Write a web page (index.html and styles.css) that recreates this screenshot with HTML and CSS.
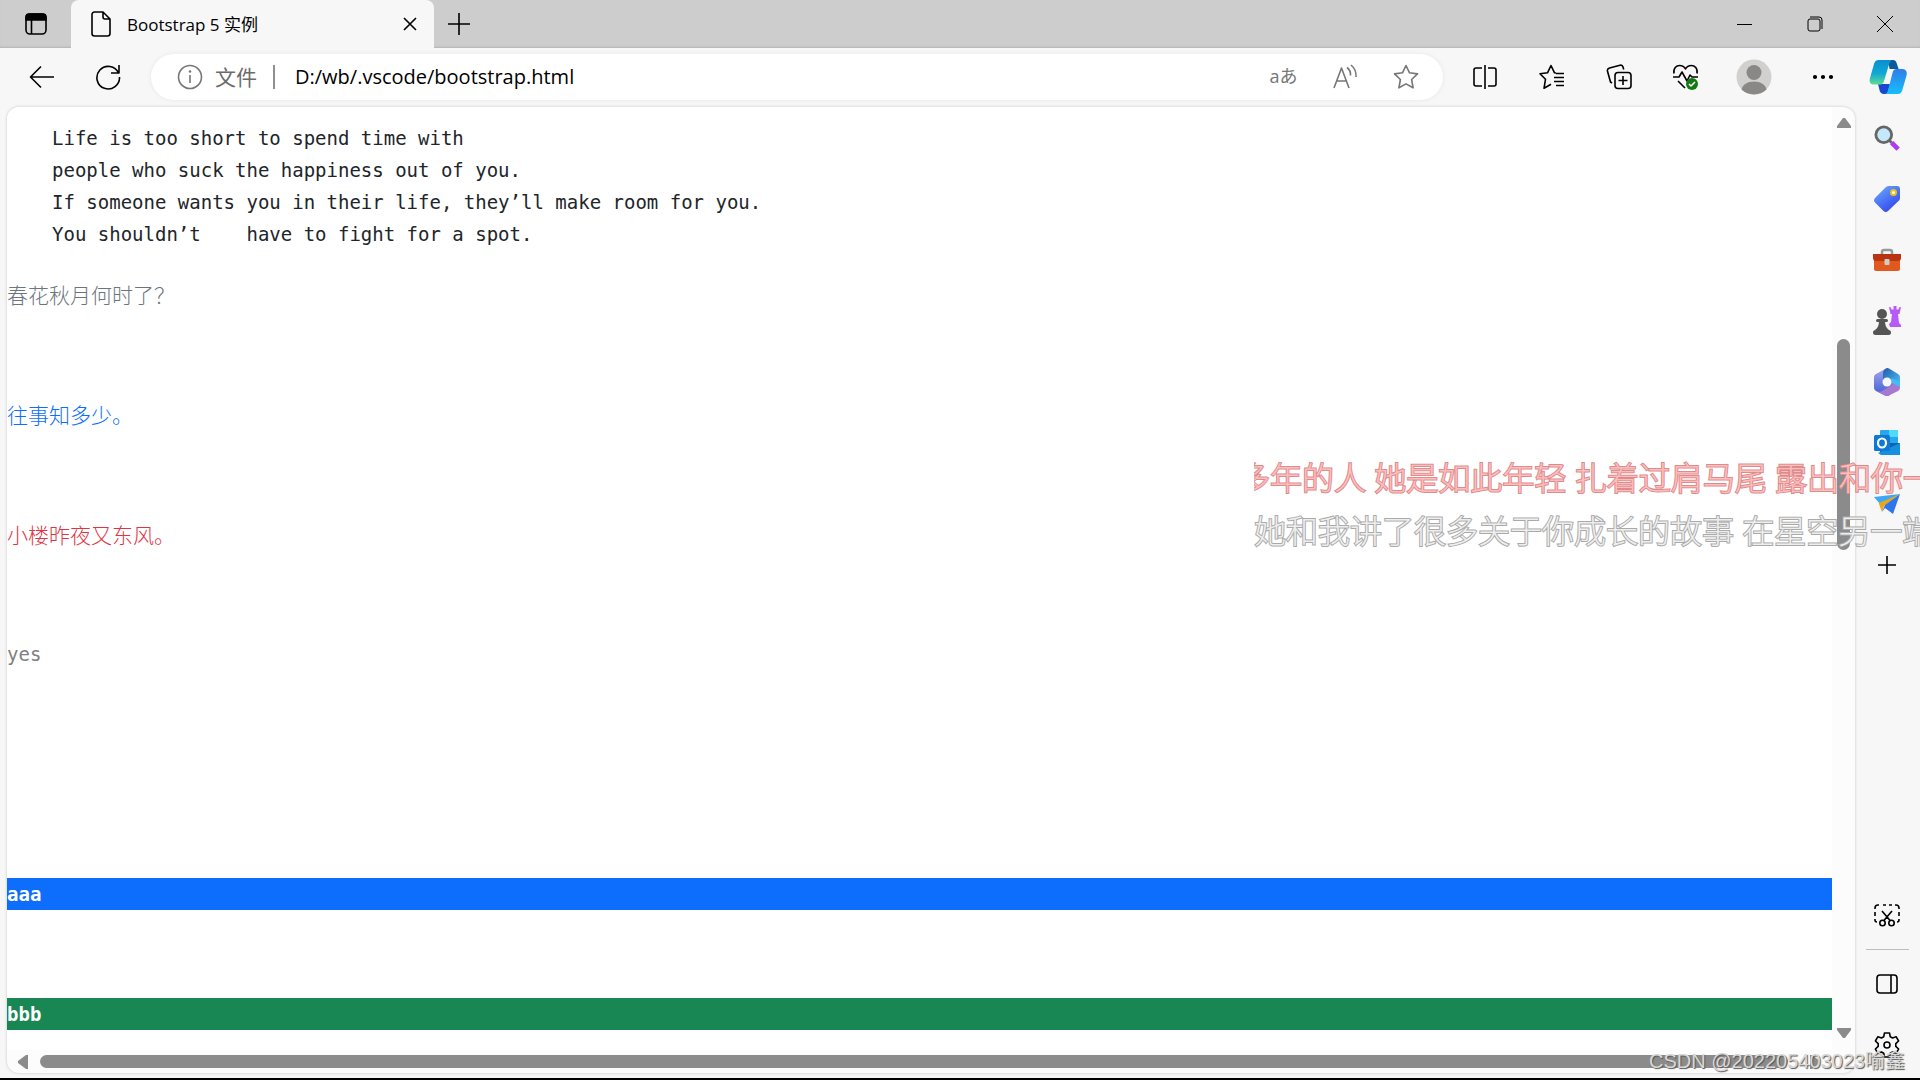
FILE: index.html
```html
<!DOCTYPE html>
<html lang="zh-CN">
<head>
<meta charset="utf-8">
<title>Bootstrap 5 实例</title>
<link rel="stylesheet" href="styles.css">
</head>
<body>
<header class="tabstrip">
  <button class="tab-actions" aria-label="Tab actions"><svg width="24" height="24" viewBox="0 0 24 24"><rect x="2" y="2" width="20" height="20" rx="4"/><path d="M7.500 8v14"/><path class="solid" d="M2 8V5a3 3 0 0 1 3-3h14a3 3 0 0 1 3 3v3z"/></svg></button>
  <div class="tab">
    <svg class="file" width="20" height="26" viewBox="0 0 20 26"><path d="M3.500 1H12l7 7v14.500a2.500 2.500 0 0 1-2.500 2.500h-13A2.500 2.500 0 0 1 1 22.500v-19A2.500 2.500 0 0 1 3.500 1zM12 1v5a2 2 0 0 0 2 2h5"/></svg>
    <span class="tab-title">Bootstrap 5 实例</span>
    <button class="tab-close" aria-label="Close tab"><svg width="14" height="14" viewBox="0 0 14 14"><path d="M1 1l12 12M13 1L1 13"/></svg></button>
  </div>
  <button class="new-tab" aria-label="New tab"><svg width="22" height="22" viewBox="0 0 22 22"><path d="M11 0v22M0 11h22"/></svg></button>
  <div class="window-controls">
    <button aria-label="Minimize"><svg width="16" height="16" viewBox="0 0 16 16"><path d="M0 8.500h15"/></svg></button>
    <button aria-label="Restore"><svg width="16" height="16" viewBox="0 0 16 16"><rect x="1" y="3" width="12" height="12" rx="2"/><path d="M3 1h9a3 3 0 0 1 3 3v9"/></svg></button>
    <button aria-label="Close"><svg width="16" height="16" viewBox="0 0 16 16"><path d="M0 0l16 16M16 0L0 16"/></svg></button>
  </div>
</header>

<nav class="toolbar">
  <button class="nav-button" aria-label="Back"><svg width="26" height="24" viewBox="0 0 26 24"><path d="M25 12H2M12 1.500L1.500 12 12 22.500"/></svg></button>
  <button class="nav-button" aria-label="Refresh"><svg width="26" height="26" viewBox="0 0 26 26"><path d="M23.500 9A11.300 11.300 0 1 0 24.500 13M24 1v8h-8"/></svg></button>
  <div class="address">
    <svg class="info" width="26" height="26" viewBox="0 0 26 26"><circle cx="13" cy="13" r="11.500"/><path d="M13 11v8"/><circle class="dot" cx="13" cy="7.500" r="1.300"/></svg>
    <label class="scheme" for="url">文件</label>
    <input class="url" id="url" type="text" value="D:/wb/.vscode/bootstrap.html">
    <button class="address-button" aria-label="Translate"><span class="translate">aあ</span></button>
    <button class="address-button" aria-label="Read aloud"><svg width="26" height="26" viewBox="0 0 26 26"><path d="M2 24L9.500 4 17 24M5 17h9M15 3.500a9 9 0 0 1 3.500 8M19 1a14 14 0 0 1 5 12"/></svg></button>
    <button class="address-button" aria-label="Favorite"><svg width="26" height="26" viewBox="0 0 26 26"><path d="M13 1.500l3.500 7.300 8 1.100-5.900 5.600 1.500 8.300-7.100-3.900-7.100 3.900 1.500-8.300-5.900-5.600 8-1.100z"/></svg></button>
  </div>
  <div class="tools">
    <button aria-label="Split screen"><svg width="26" height="26" viewBox="0 0 26 26"><path d="M10 4H4a2 2 0 0 0-2 2v14a2 2 0 0 0 2 2h6M16 4h6a2 2 0 0 1 2 2v14a2 2 0 0 1-2 2h-6M13 1v24"/></svg></button>
    <button aria-label="Favorites"><svg width="26" height="26" viewBox="0 0 26 26"><path d="M17 9l-1.500-.2L12 1.500 8.500 8.800l-7.500 1 5.500 5.500-1.500 9 7-4M17 9.500h8M15 13.500h10M15 17.500h10M17 21.500h8"/></svg></button>
    <button aria-label="Collections"><svg width="26" height="26" viewBox="0 0 26 26"><rect x="9" y="8.500" width="16" height="16" rx="3"/><path d="M17 12v9M12.500 16.500h9M6 19l-1.500-1L1.300 6.500A3 3 0 0 1 3.500 4L14 1.200A2.500 2.500 0 0 1 17 3l.7 2.500"/></svg></button>
    <button aria-label="Browser essentials"><svg width="28" height="26" viewBox="0 0 28 26"><path d="M2 9.500C1 4 4.500 1.500 7.500 1.500c3 0 5 1.500 6 3.500 1-2 3-3.500 6-3.500s6.500 2.500 5.500 8M1 13h6l3-5 5 9 3-6 2 2h6M6 17l7 7"/><circle class="green" cx="20" cy="20" r="6"/><path class="check" d="M17 20l2 2 4-4"/></svg></button>
    <button class="profile" aria-label="Profile"><svg width="36" height="36" viewBox="0 0 36 36"><circle class="face" cx="18" cy="18" r="17.500"/><circle class="person" cx="18" cy="13.500" r="7.500"/><path class="person" d="M5.500 30.500c1-5 6-8 12.500-8s11.500 3 12.500 8c-7 6.500-18 6.500-25 0z"/></svg></button>
    <button class="more" aria-label="Settings and more"><svg width="22" height="6" viewBox="0 0 22 6"><circle class="solid" cx="3" cy="3" r="1.300"/><circle class="solid" cx="11" cy="3" r="1.300"/><circle class="solid" cx="19" cy="3" r="1.300"/></svg></button>
    <button class="copilot" aria-label="Copilot"><svg width="38" height="34" viewBox="0 0 38 34">
      <defs>
        <linearGradient id="cpA" x1="0" y1="0" x2="0" y2="1"><stop offset="0" stop-color="#0a8fd0"/><stop offset=".55" stop-color="#10a9d5"/><stop offset="1" stop-color="#62dc90"/></linearGradient>
        <linearGradient id="cpB" x1="0" y1="0" x2="0" y2="1"><stop offset="0" stop-color="#2f7de8"/><stop offset="1" stop-color="#15c0fb"/></linearGradient>
      </defs>
      <path fill="#0a5a9c" d="M19 0h5c2 0 3 1 3.600 3l2 6h-9z"/>
      <path fill="#1849d0" d="M9 24h12l-2.500 10H15c-3 0-4-2-4.500-4z"/>
      <path fill="url(#cpA)" d="M10 0h13c-2 1-2.600 3-3.300 5.500L15 21c-.8 2.600-2 3.600-4.500 3.600H5C1 24.600 0 22 1 18L5 4c.8-2.700 2-4 5-4z"/>
      <path fill="url(#cpB)" d="M27.500 9H33c4 0 5.500 2.500 4.500 6.500l-4 14c-.8 3-2 4.500-5 4.500H15.500c2 0 3-2 3.600-4l4.400-17c.7-2.600 1.700-4 4-4z"/></svg></button>
  </div>
</nav>

<div class="workspace">
  <div class="frame">
    <main class="document">
      <pre class="quote">Life is too short to spend time with
people who suck the happiness out of you.
If someone wants you in their life, they’ll make room for you.
You shouldn’t    have to fight for a spot.</pre>
      <p class="line muted">春花秋月何时了？</p>
      <p class="line primary">往事知多少。</p>
      <p class="line danger">小楼昨夜又东风。</p>
      <p class="line faded">yes</p>
      <p class="line block bg-primary">aaa</p>
      <p class="line block bg-success">bbb</p>
    </main>
    <div class="scroll-y">
      <svg width="14" height="10" viewBox="0 0 14 10"><path d="M6 0h2l6 8v2H0V8z"/></svg>
      <div class="track-y"><div class="thumb-y"></div></div>
      <svg width="14" height="10" viewBox="0 0 14 10"><path d="M0 0h14v2L8 10H6L0 2z"/></svg>
    </div>
    <div class="scroll-x">
      <svg width="10" height="14" viewBox="0 0 10 14"><path d="M10 0v14H8L0 8V6l8-6z"/></svg>
      <div class="thumb-x"></div>
      <svg width="10" height="14" viewBox="0 0 10 14"><path d="M0 0v14h2l8-6V6L2 0z"/></svg>
    </div>
  </div>

  <aside class="sidebar">
    <button aria-label="Search"><svg width="26" height="26" viewBox="0 0 28 28"><path d="M19 19l7 7" stroke="#b436f5" stroke-width="5"/><path d="M16 16l3 3" stroke="#666" stroke-width="3"/><circle cx="10.500" cy="10.500" r="8.500" fill="#c5e7fb" stroke="#666" stroke-width="3"/></svg></button>
    <button aria-label="Shopping"><svg width="26" height="26" viewBox="0 0 26 26"><defs><linearGradient id="tag" x1="0" y1="0" x2=".7" y2="1"><stop offset="0" stop-color="#6cb2fb"/><stop offset="1" stop-color="#3344f0"/></linearGradient></defs><path fill="url(#tag)" d="M15 0h8a3 3 0 0 1 3 3v9c0 1-.5 2-1 2.500L14 25c-1.500 1.300-3 1.300-4.500 0L1 16.500c-1.300-1.500-1.300-3 0-4.500L12 1c1-.8 2-1 3-1z"/><circle cx="19.500" cy="6.500" r="2.500" fill="#fff" stroke="#edc11a" stroke-width="2"/></svg></button>
    <button aria-label="Tools"><svg width="28" height="24" viewBox="0 0 28 24"><path d="M9 7V4a2 2 0 0 1 2-2h6a2 2 0 0 1 2 2v3" fill="none" stroke="#999" stroke-width="2.500"/><path fill="#e0591f" d="M1 10h26v11a2 2 0 0 1-2 2H3a2 2 0 0 1-2-2z"/><path fill="#bb3412" d="M0 6h28v4c0 2-1 3-3 3H3c-2 0-3-1-3-3z"/><rect x="11.500" y="11" width="5" height="6" rx="1" fill="#ccc"/></svg></button>
    <button aria-label="Games"><svg width="28" height="30" viewBox="0 0 28 30"><path fill="#b65af8" d="M16 1l2 .5.5 2H20.500V0h3v3.500h2l.5-2 2-.5-1.500 7H25l1 9 2 2v2H17l-1-3 2-2 1-8h-1.500z"/><g fill="#555"><circle cx="9" cy="8" r="5"/><rect x="3" y="13" width="12" height="3" rx="1.500"/><path d="M6 15h6c0 4 1 7 4 9H2c3-2 4-5 4-9z"/><rect x="0" y="24" width="18" height="5" rx="2.500"/></g></svg></button>
    <button aria-label="Microsoft 365"><svg width="26" height="28" viewBox="0 0 26 28"><defs><linearGradient id="ms" x1="0" y1="0" x2="0" y2="1"><stop offset="0" stop-color="#a7a6ee"/><stop offset="1" stop-color="#3c5ed0"/></linearGradient><linearGradient id="mb" x1="0" y1="0" x2="1" y2="1"><stop offset="0" stop-color="#2458ad"/><stop offset="1" stop-color="#4dcaf7"/></linearGradient></defs><path fill="url(#ms)" d="M13 0L2 6C.500 7 0 8 0 9.500V19c0 2 .5 3 2 4l9 4.500c1.500.7 2.500.7 4 0L20 14z"/><path fill="url(#mb)" d="M13 0c-3 1-4 3-4 6v7l4-2 4 4 9 4V9.500C26 8 25.500 7 24 6L15 .500C14 0 13.500 0 13 0z"/><path fill="#a778d0" d="M26 14v5c0 2-.5 3-2 4l-9 4.500c-1.500.7-2.500.7-4 0L2 23c3 1 5 1 7-.5L18 17v-2z"/><path fill="#45bdf3" d="M17 10l9 4v5l-8-4z"/><circle cx="13" cy="14" r="4.500" fill="#f7f7f7"/></svg></button>
    <button aria-label="Outlook"><svg width="26" height="26" viewBox="0 0 26 26"><path fill="#28a8ea" d="M6 1a1 1 0 0 1 1-1h17v15H6z"/><path fill="#50d9ff" d="M15 0h9v7h-9z"/><path fill="#0a64ad" d="M6 13h20v11H6z"/><path fill="#1490df" d="M26 13v12H7l-3-2z"/><rect y="5" width="16" height="16" rx="1.500" fill="#0f78d4"/><ellipse cx="8" cy="13" rx="4" ry="4.500" fill="none" stroke="#fff" stroke-width="2.200"/></svg></button>
    <button aria-label="Drop"><svg width="26" height="20" viewBox="0 0 26 20"><path fill="#3ca8f8" d="M0 3L26 0 7 11z"/><path fill="#eda612" d="M5 9L26 0 10 12l-2 6-3-8z"/><path fill="#2f75ec" d="M26 0l-7 20-8-6-3 4 3-7z"/></svg></button>
    <button class="line-icon" aria-label="Add"><svg width="20" height="20" viewBox="0 0 20 20"><path d="M10 1v18M1 10h18"/></svg></button>
    <div class="sidebar-bottom">
      <button class="line-icon" aria-label="Screenshot"><svg width="26" height="24" viewBox="0 0 26 24"><path d="M1 5V4a3 3 0 0 1 3-3h1M9 1h3M15 1h3M21 1h1a3 3 0 0 1 3 3v1M1 8v4M25 8v4M1 15v1a2 2 0 0 0 2 2M25 15v1a2 2 0 0 1-2 2M8 7l8.500 10M18 7L9.500 17"/><circle cx="8.500" cy="19" r="2.700"/><circle cx="17.500" cy="19" r="2.700"/></svg></button>
      <hr class="divider">
      <button class="line-icon" aria-label="Hide sidebar"><svg width="24" height="20" viewBox="0 0 24 20"><rect x="2" y="1" width="20" height="18" rx="3"/><path d="M16 1v18"/></svg></button>
      <button class="line-icon" aria-label="Settings"><svg width="28" height="28" viewBox="0 0 28 28"><path d="M11.500 2h5l.8 3.800 2.200 1.200 3.600-1.300 2.500 4.300-2.800 2.600v2.800l2.800 2.600-2.500 4.300-3.600-1.300-2.200 1.200-.8 3.800h-5l-.8-3.800L8.500 21l-3.600 1.300L2.400 18l2.800-2.600v-2.800L2.400 10l2.500-4.300L8.500 7l2.200-1.200z"/><circle cx="14" cy="14" r="3"/></svg></button>
    </div>
  </aside>
</div>

<div class="lyrics">
  <p class="lyric current">多年的人 她是如此年轻 扎着过肩马尾 露出和你一</p>
  <p class="lyric next">她和我讲了很多关于你成长的故事 在星空另一端</p>
</div>
<div class="watermark">CSDN @202205403023喻鑫</div>
</body>
</html>
```
FILE: styles.css
```css
* { box-sizing: border-box; }
body {
  margin: 0;
  height: 100vh;
  display: flex;
  flex-direction: column;
  position: relative;
  overflow: hidden;
  background: #f7f7f7;
  border-bottom: 2px solid #000;
  color: #000;
  font-family: "Open Sans", "Noto Sans CJK SC", sans-serif;
}
button {
  display: flex;
  align-items: center;
  justify-content: center;
  padding: 0;
  border: 0;
  background: none;
  color: inherit;
  font: inherit;
}
p, pre { margin: 0; }
svg { display: block; flex: none; }

/* Tab strip */
.tabstrip {
  display: flex;
  flex: none;
  height: 48px;
  background: #cdcdcd;
  box-shadow: inset 0 -2px 2px -1px #b4b4b4;
}
.tabstrip svg, .toolbar svg, .line-icon svg {
  fill: none;
  stroke: #000;
  stroke-width: 1.6;
  stroke-linejoin: round;
}
.tabstrip .solid, .toolbar .solid { fill: #000; }
.tab-actions { width: 71px; }
.tab {
  display: flex;
  align-items: center;
  width: 363px;
  padding: 0 10px 0 20px;
  border-radius: 8px 8px 0 0;
  background: #f7f7f7;
}
.tab-title {
  flex: 1;
  padding: 0 0 2px 16px;
  font-size: 17px;
}
.tab-close { width: 28px; height: 28px; }
.new-tab { width: 50px; }
.window-controls {
  display: flex;
  margin-left: auto;
}
.window-controls button { width: 70px; }
.window-controls svg { stroke-width: 1; }

/* Toolbar */
.toolbar {
  display: flex;
  flex: none;
  align-items: center;
  height: 59px;
  padding: 0 0 1px 9px;
}
.nav-button { width: 66px; height: 46px; }
.address {
  display: flex;
  flex: 1;
  align-items: center;
  height: 46px;
  margin: 0 8px 0 10px;
  padding: 0 7px 0 26px;
  border-radius: 23px;
  background: #fff;
  box-shadow: 0 0 4px #e6e6e6;
}
.address svg { stroke: #767676; }
.address .dot { fill: #767676; stroke: none; }
.scheme {
  margin-left: 12px;
  padding-right: 16px;
  border-right: 2px solid #8f8f8f;
  color: #6b6b6b;
  font-size: 21px;
  line-height: 24px;
}
.url {
  flex: 1;
  min-width: 0;
  padding: 0 20px;
  border: 0;
  outline: 0;
  background: none;
  color: #000;
  font: 20px/28px "Open Sans", sans-serif;
}
.address-button { width: 61px; height: 40px; color: #767676; }
.translate { padding-bottom: 3px; font-size: 18px; line-height: 24px; }
.tools { display: flex; }
.tools button { width: 67px; height: 46px; }
.tools .profile { width: 70px; }
.tools .more { width: 67px; }
.tools .copilot { width: 63px; margin-right: 1px; }
.tools .copilot svg { stroke: none; }
.tools .green { fill: #107c10; stroke: none; }
.tools .check { stroke: #fff; }
.tools .face { fill: #d2d0ce; stroke: none; }
.tools .person { fill: #8a8886; stroke: none; }

/* Page frame with its scroll bars */
.workspace {
  display: flex;
  flex: 1;
  min-height: 0;
}
.frame {
  display: grid;
  flex: 1;
  grid-template-columns: 1fr 23px;
  grid-template-rows: 1fr 23px;
  min-width: 0;
  margin: 0 0 5px 7px;
  overflow: hidden;
  border-radius: 12px;
  background: #fcfcfc;
  box-shadow: 0 0 3px #c4c4c4;
}
.document {
  min-height: 0;
  overflow: hidden;
  padding-top: 15px;
  background: #fff;
  color: #212529;
}
.quote, .line {
  font-family: "DejaVu Sans Mono", "Noto Sans CJK SC", monospace;
  font-size: 19px;
  line-height: 32px;
}
.quote { margin: 0 0 28px 45px; }
.line { margin-bottom: 88px; }
.muted, .primary, .danger {
  font-family: "Noto Sans CJK SC", sans-serif;
  font-size: 21px;
  font-weight: 300;
}
.muted { color: #6c757d; }
.primary { color: #0d6efd; }
.danger { color: #dc3545; }
.faded { margin-bottom: 208px; color: #808080; }
.block { color: #fff; font-weight: 700; }
.bg-primary { background: #0d6efd; }
.bg-success { background: #198754; }
.scroll-y {
  display: flex;
  flex-direction: column;
  align-items: center;
  padding: 11px 0 12px;
}
.scroll-y svg, .scroll-x svg { fill: #8b8b8b; }
.track-y { flex: 1; margin: 10px 0; }
.thumb-y {
  width: 13px;
  height: 24%;
  margin-top: 201px;
  border-radius: 7px;
  background: #8b8b8b;
}
.scroll-x {
  display: flex;
  align-items: center;
  gap: 12px;
  padding: 0 12px 0 11px;
}
.thumb-x {
  flex: 1;
  height: 13px;
  margin-right: 10px;
  border-radius: 7px;
  background: #8b8b8b;
}

/* Sidebar */
.sidebar {
  display: flex;
  flex: none;
  flex-direction: column;
  width: 65px;
  padding-bottom: 3px;
}
.sidebar button { width: 64px; height: 61px; }
.sidebar-bottom { margin-top: auto; }
.divider {
  width: 43px;
  height: 1px;
  margin: 3px auto;
  border: 0;
  background: #bdbdbd;
}

/* Desktop lyrics floating above the window */
.lyrics {
  position: absolute;
  top: 451px;
  right: 0;
  width: 666px;
  overflow: hidden;
}
.lyric {
  height: 53px;
  font-family: "Open Sans", "Noto Sans CJK SC", sans-serif;
  font-size: 32px;
  font-weight: 300;
  line-height: 53px;
  white-space: nowrap;
  paint-order: stroke fill;
}
.current {
  margin-left: -16px;
  color: #ffbcbc;
  -webkit-text-stroke: 2px #db8d8d;
}
.next {
  color: #eee;
  -webkit-text-stroke: 2px #aaa;
}
.watermark {
  position: absolute;
  right: 15px;
  bottom: 5px;
  color: #d8d8d8;
  font: 20px/24px "Liberation Sans", "Noto Sans CJK SC", sans-serif;
  text-shadow: 1px 1px 1px #555;
}
```
